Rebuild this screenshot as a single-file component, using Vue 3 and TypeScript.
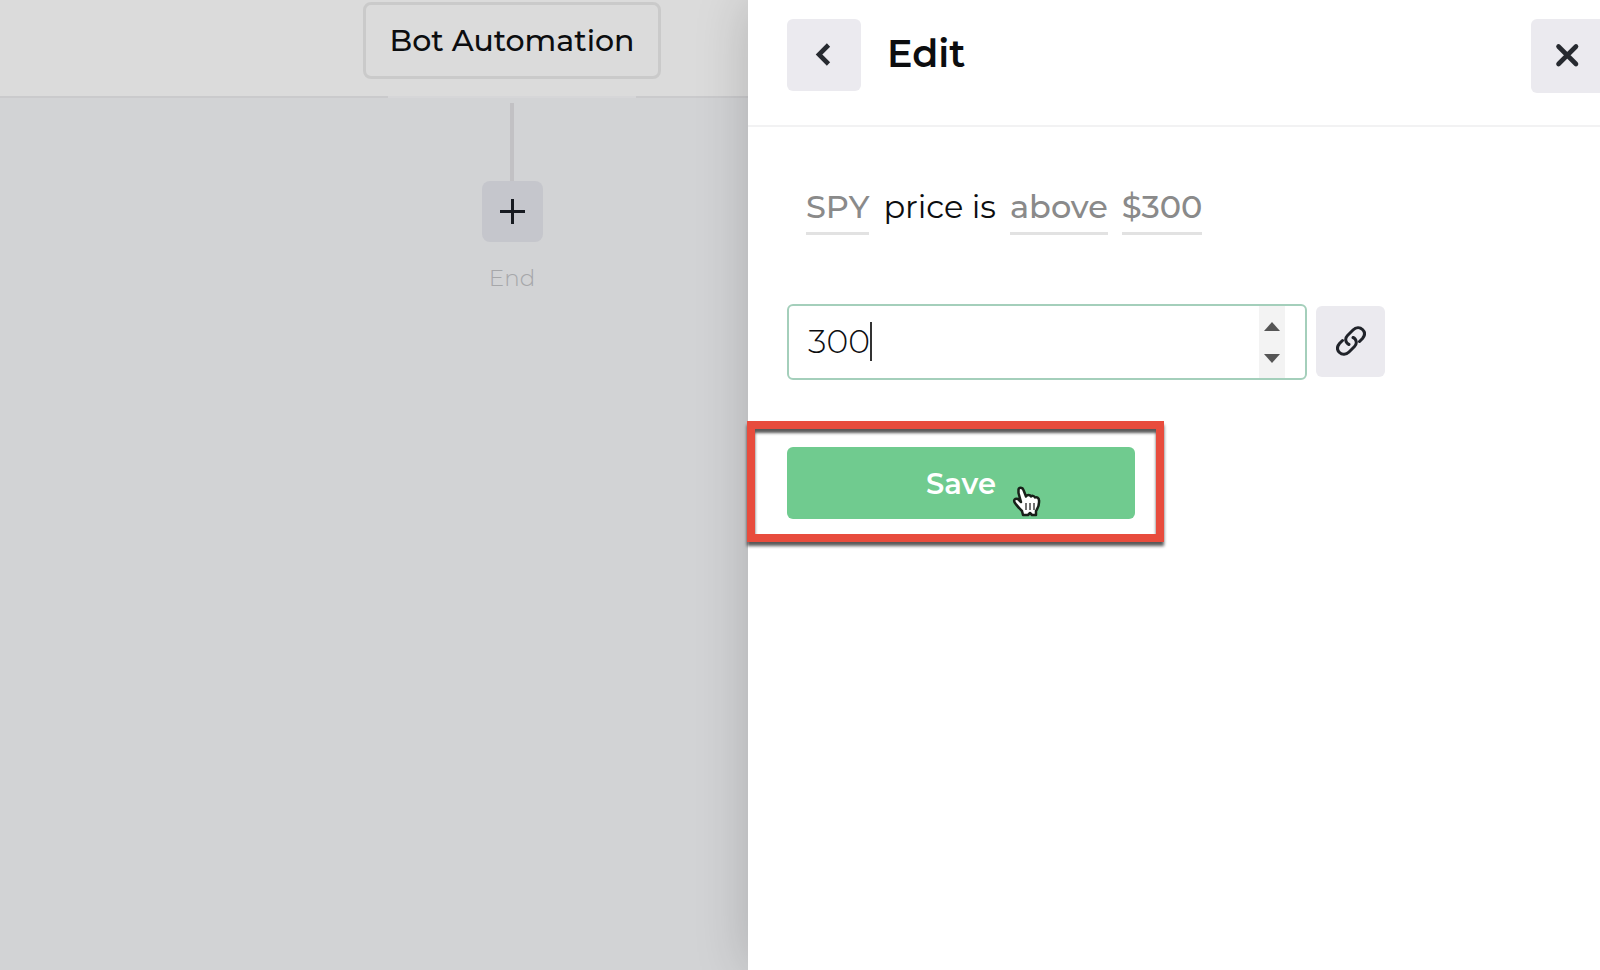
<script setup lang="ts">
import { ref } from 'vue'

const price = ref<number>(300)
const step = (delta: number) => {
  price.value += delta
}
</script>

<template>
  <div class="app">
    <main class="stage">
      <header class="stage-header">
        <div class="column">
          <button class="bot-name" type="button">Bot Automation</button>
          <span class="notch"></span>
        </div>
      </header>
      <div class="column flow">
        <span class="connector"></span>
        <button class="add" type="button" aria-label="Add step">
          <svg width="25" height="25" viewBox="0 0 25 25"><path d="M12.500 0v25M0 12.500h25" fill="none" stroke="#171a20" stroke-width="3" /></svg>
        </button>
        <span class="end">End</span>
      </div>
    </main>

    <aside class="drawer">
      <header class="drawer-header">
        <button class="tool back" type="button" aria-label="Back">
          <svg width="18" height="26" viewBox="0 0 18 26"><path d="M13.500 3L4 12.500l9.500 9.500" fill="none" stroke="#272a30" stroke-width="4.600" /></svg>
        </button>
        <h1>Edit</h1>
        <button class="tool close" type="button" aria-label="Close">
          <svg width="26" height="26" viewBox="0 0 26 26"><path d="M3.500 3.500l17.500 17.500M21 3.500L3.500 21" fill="none" stroke="#272a30" stroke-width="4.600" stroke-linecap="round" /></svg>
        </button>
      </header>

      <section class="content">
        <p class="sentence">
          <a class="term symbol" href="#">SPY</a>
          <span class="plain">price is</span>
          <a class="term relation" href="#">above</a>
          <a class="term amount" href="#">$300</a>
        </p>

        <form @submit.prevent>
          <div class="field-row">
            <div class="field">
              <span class="value">
                <input v-model="price" type="number" aria-label="Price" />
                <span class="caret"></span>
              </span>
              <span class="spinner">
                <button type="button" aria-label="Increase" @click="step(1)">
                  <svg width="16" height="9" viewBox="0 0 16 9"><path d="M8 0l8 9H0z" fill="#555" /></svg>
                </button>
                <button type="button" aria-label="Decrease" @click="step(-1)">
                  <svg width="16" height="9" viewBox="0 0 16 9"><path d="M0 0h16L8 9z" fill="#555" /></svg>
                </button>
              </span>
            </div>
            <button class="tool link" type="button" aria-label="Link value">
              <svg width="30" height="30" viewBox="0 0 30 30" fill="none" stroke="#20232a" stroke-width="3" stroke-linecap="round">
                <path d="M13 18.500C9.500 17 8.500 12.500 11.500 9.500L17 4C20 1 24 1 26.500 3.500C29 6 29 9.500 26.500 12.500L23.500 15.500" />
                <path d="M17 11.500C20.500 13 21.500 17.500 18.500 20.500L13 26C10 29 6 29 3.500 26.500C1 24 1 20.500 3.500 17.500L6.500 14.500" />
              </svg>
            </button>
          </div>

          <div class="highlight">
            <button class="save" type="submit">Save</button>
            <svg class="pointer" width="30" height="32" viewBox="0 0 30 32">
              <path d="M6.500 3.500C7 1 10.500 1 11.500 4L14 10.500C15 8.500 18 8.500 19 10.500C20 9.500 22 9.500 23 11.500C25 10.500 27 12 27 14.500C27.500 19 26 22 24 25L24 29H20L18 27L16 29H11L10 25C7 22 5 20 3 17C1 14 3 12 6 13L9 16L6.500 7Z" fill="#fff" stroke="#182019" stroke-width="2.500" stroke-linejoin="round" />
              <path d="M14 17v7M18 17v7M22 17v7" fill="none" stroke="#444" stroke-width="1.500" />
            </svg>
          </div>
        </form>
      </section>
    </aside>
  </div>
</template>

<style>
body {
  margin: 0;
}
</style>

<style scoped>
.app {
  position: relative;
  min-height: 100vh;
  overflow: hidden;
  background: #d2d3d5;
  color: #0c0d0f;
  font-family: Montserrat, Inter, "Liberation Sans", sans-serif;
}
.app *,
.app *::before {
  box-sizing: border-box;
}
button,
input {
  margin: 0;
  padding: 0;
  border: 0;
  background: none;
  color: inherit;
  font: inherit;
}
svg {
  display: block;
}
.stage-header {
  padding-top: 2px;
  background: #dbdbdb;
  border-bottom: 2px solid #cacacc;
}
.column {
  display: flex;
  flex-direction: column;
  align-items: center;
  width: 64%;
}
.bot-name {
  width: 298px;
  height: 77px;
  border: 3px solid #cacaca;
  border-radius: 8px;
  font-size: 30px;
  font-weight: 500;
  white-space: nowrap;
}
.notch {
  width: 248px;
  height: 2px;
  margin: 17px 0 -2px;
  background: #d6d6d8;
}
.flow {
  padding-top: 5px;
}
.connector {
  width: 4px;
  height: 78px;
  background: #c2c1c4;
}
.add {
  display: grid;
  place-items: center;
  width: 61px;
  height: 61px;
  border-radius: 8px;
  background: #c5c6cc;
}
.end {
  margin-top: 20px;
  font-size: 23px;
  line-height: 32px;
  font-weight: 300;
  color: #a6a7aa;
}
.drawer {
  position: absolute;
  top: 0;
  right: 0;
  bottom: 0;
  width: 53.25%;
  background: #fff;
  box-shadow: 0 0 50px rgba(0, 0, 0, 0.18);
}
.drawer-header {
  display: flex;
  align-items: flex-start;
  height: 127px;
  padding: 19px 0 0 39px;
  border-bottom: 2px solid #f2f2f3;
  overflow: hidden;
}
.tool {
  display: grid;
  flex: none;
  place-items: center;
  border-radius: 6px;
  background: #ebeaef;
}
.back {
  width: 74px;
  height: 72px;
}
.close {
  width: 74px;
  height: 74px;
  margin: 0 -5px 0 auto;
}
h1 {
  margin: 0 0 0 26px;
  font-size: 38px;
  line-height: 70px;
  font-weight: 600;
}
.content {
  padding: 60px 39px 0;
}
.sentence {
  display: flex;
  margin: 0 0 0 19px;
  font-size: 32px;
  line-height: 40px;
  white-space: nowrap;
}
.term {
  height: 48px;
  border-bottom: 3px solid #e2e2e2;
  color: #8a8a8a;
  font-weight: 500;
  text-align: center;
  text-decoration: none;
}
.symbol {
  min-width: 63px;
}
.plain {
  min-width: 112px;
  margin: 0 14px;
  text-align: center;
}
.relation {
  min-width: 97px;
}
.amount {
  min-width: 80px;
  margin-left: 14px;
}
.field-row {
  display: flex;
  align-items: flex-start;
  gap: 9px;
  margin-top: 69px;
}
.field {
  display: flex;
  width: 520px;
  height: 76px;
  padding-right: 20px;
  border: 2px solid #a4cfbb;
  border-radius: 6px;
}
.value {
  position: relative;
  flex: 1;
  min-width: 0;
}
input {
  width: 100%;
  height: 100%;
  padding: 0 0 2px 19px;
  outline: none;
  font-size: 33px;
  font-weight: 300;
  appearance: textfield;
}
input::-webkit-inner-spin-button {
  display: none;
}
.caret {
  position: absolute;
  top: 16px;
  left: 81px;
  width: 2px;
  height: 39px;
  background: #333;
}
.spinner {
  display: flex;
  flex-direction: column;
  width: 26px;
  background: #f3f3f3;
}
.spinner button {
  display: grid;
  flex: 1;
  place-items: center;
}
.spinner button:first-child {
  padding-top: 5px;
}
.spinner button:last-child {
  padding-bottom: 4px;
}
.link {
  width: 69px;
  height: 71px;
  margin-top: 2px;
  padding-bottom: 2px;
}
.highlight {
  position: relative;
  width: 417px;
  height: 121px;
  margin: 41px 0 0 -40px;
  padding: 18px 21px 0 32px;
  border: 8px solid #e84c3d;
  box-shadow: 0 4px 3px rgba(0, 0, 0, 0.65), inset 0 4px 3px rgba(0, 0, 0, 0.65);
}
.save {
  display: block;
  width: 100%;
  height: 72px;
  border-radius: 6px;
  background: #70cb8f;
  color: #fff;
  font-size: 29px;
  font-weight: 600;
}
.pointer {
  position: absolute;
  top: 57px;
  left: 257px;
}
</style>
